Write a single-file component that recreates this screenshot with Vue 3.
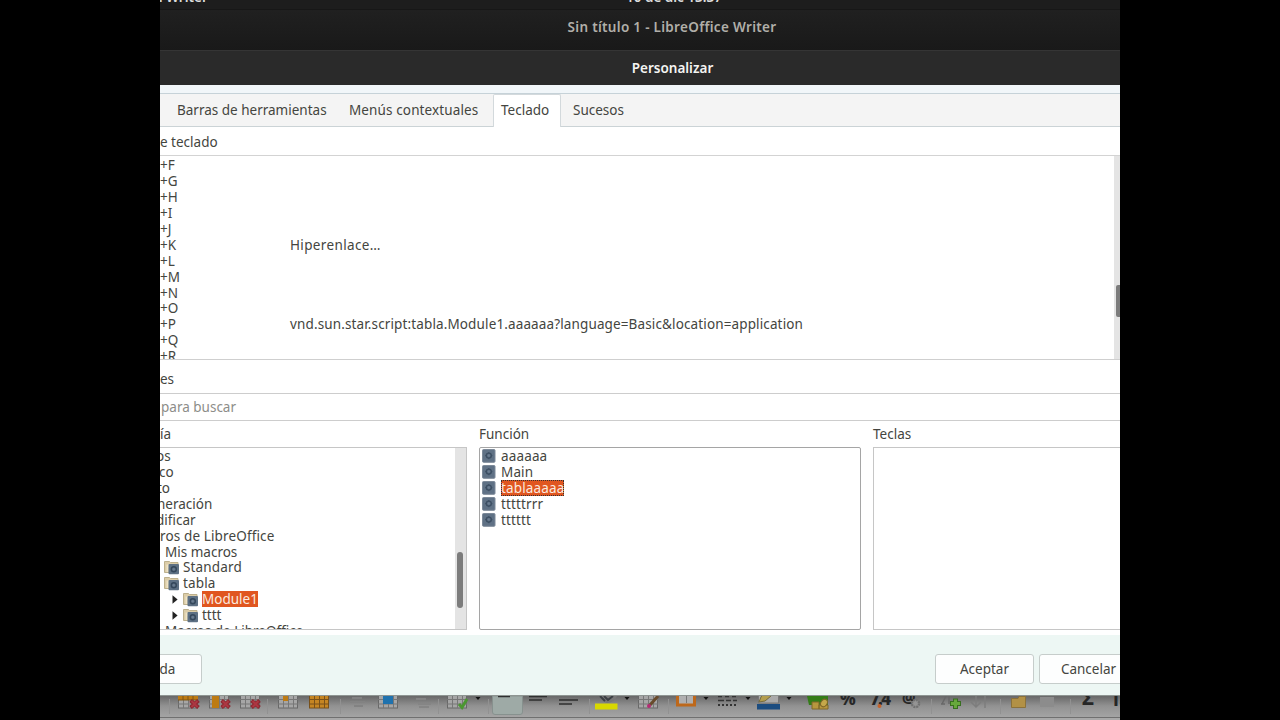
<script setup>
const shortcuts = [
  { key: '+F' },
  { key: '+G' },
  { key: '+H' },
  { key: '+I' },
  { key: '+J' },
  { key: '+K', command: 'Hiperenlace…' },
  { key: '+L' },
  { key: '+M' },
  { key: '+N' },
  { key: '+O' },
  { key: '+P', command: 'vnd.sun.star.script:tabla.Module1.aaaaaa?language=Basic&location=application' },
  { key: '+Q' },
  { key: '+R' }
]

const categories = [
  { label: 'os', level: 'cut-o' },
  { label: 'co', level: 'cut-c' },
  { label: 'to', level: 'cut-t' },
  { label: 'neración', level: 'cut-n' },
  { label: 'dificar', level: 'cut-d' },
  { label: 'ros de LibreOffice', level: 'cut-r' },
  { label: 'Mis macros', level: 'macros' },
  { label: 'Standard', level: 'library', icon: true },
  { label: 'tabla', level: 'library', icon: true },
  { label: 'Module1', level: 'module', icon: true, arrow: true, selected: true },
  { label: 'tttt', level: 'module', icon: true, arrow: true },
  { label: 'Macros de LibreOffice', level: 'macros' }
]

const functions = [
  { label: 'aaaaaa' },
  { label: 'Main' },
  { label: 'tablaaaaa', selected: true },
  { label: 'tttttrrr' },
  { label: 'tttttt' }
]

const separators = [169, 267, 340, 438, 488, 589, 668, 931, 1000, 1070]
const dropdowns = [478, 627, 706, 748, 789]
const grids = [178, 209, 240, 278, 378, 447, 638]
const crosses = [190, 221, 251]
</script>

<template>
  <div class="stage">
    <div class="screen">
      <div class="top-bar">
        <span class="app-name">n Writer</span>
        <span class="clock">10 de dic 13:37</span>
      </div>
      <div class="writer-title">Sin título 1 - LibreOffice Writer</div>
      <div class="dialog-title">Personalizar</div>

      <div class="dialog">
        <div class="tabs">
          <div class="tab toolbars">Barras de herramientas</div>
          <div class="tab menus">Menús contextuales</div>
          <div class="tab active">Teclado</div>
          <div class="tab events">Sucesos</div>
        </div>

        <div class="label shortcuts-label">e teclado</div>
        <div class="shortcuts">
          <div class="shortcut-rows">
            <div v-for="item in shortcuts" :key="item.key" class="shortcut">
              <span class="key">{{ item.key }}</span>
              <span class="command" :class="{ script: item.key === '+P' }">{{ item.command }}</span>
            </div>
          </div>
          <div class="shortcut-scroll"><div class="thumb"></div></div>
        </div>

        <div class="label functions-label">es</div>
        <div class="search">para buscar</div>

        <div class="columns">
          <div class="column category">
            <div class="label category-label">ía</div>
            <div class="panel">
              <div class="rows">
                <div v-for="item in categories" :key="item.label" class="row" :class="item.level">
                  <svg v-if="item.arrow" class="arrow" width="6" height="9" viewBox="0 0 6 9">
                    <path d="M0.5 0.2 L5.6 4.5 L0.5 8.8 Z" fill="#222" />
                  </svg>
                  <svg v-if="item.icon" class="folder" width="16" height="15" viewBox="0 0 16 15">
                    <path d="M0.5 1.5 H5.5 L6.5 2.5 H14 V12.5 H0.5 Z" fill="#dccda8" stroke="#bdb08c" />
                    <path d="M2.5 4.5 H13 V8 H4.5 V12 H2.5 Z" fill="#efe4c5" />
                    <rect x="4.5" y="4" width="10.5" height="10.2" rx="1" fill="#5d7084" />
                    <circle cx="9.8" cy="9.2" r="2.5" fill="none" stroke="#34475b" stroke-width="1.4" />
                    <circle cx="9.8" cy="9.2" r="1" fill="#6b7d91" />
                  </svg>
                  <span class="name" :class="{ selected: item.selected }">{{ item.label }}</span>
                </div>
              </div>
              <div class="category-scroll"><div class="thumb"></div></div>
            </div>
          </div>

          <div class="column function">
            <div class="label">Función</div>
            <div class="panel">
              <div class="rows">
                <div v-for="item in functions" :key="item.label" class="row">
                  <svg class="macro" width="14" height="14" viewBox="0 0 14 14">
                    <rect x="0.5" y="0.5" width="12.5" height="12.8" rx="1" fill="#5f7185" stroke="#7c8998" />
                    <circle cx="6.8" cy="6.6" r="2.5" fill="none" stroke="#3d4f63" stroke-width="1.4" />
                    <path d="M6.8 3 V10.2 M3.2 6.6 H10.4" stroke="#3d4f63" stroke-dasharray="1.3 4.6" />
                    <circle cx="6.8" cy="6.6" r="1.1" fill="#6b7d91" />
                  </svg>
                  <span class="name" :class="{ selected: item.selected, focused: item.selected }">{{ item.label }}</span>
                </div>
              </div>
            </div>
          </div>

          <div class="column keys">
            <div class="label">Teclas</div>
            <div class="panel"></div>
          </div>
        </div>

        <div class="footer">
          <button class="help">da</button>
          <button class="accept">Aceptar</button>
          <button class="cancel">Cancelar</button>
        </div>
      </div>

      <div class="toolbar">
        <svg width="960" height="24" viewBox="160 696 960 24">
          <path v-for="x in separators" :key="'s' + x" :d="`M${x}.5 699 V714`" stroke="#919191" />

          <!-- table grids -->
          <g v-for="x in grids" :key="'g' + x">
            <rect :x="x + 0.5" y="690.5" width="19" height="17.5" fill="#a6a6a6" stroke="#686868" />
            <path :d="`M${x} 699.5 h20 M${x} 704 h20 M${x + 5.5} 696 v12 M${x + 10.5} 696 v12 M${x + 15.5} 696 v12`" stroke="#777" />
          </g>
          <path d="M178 696 H198 V700 H178 Z M212 696 H219 V708 H212 Z M283 696 H288 V701 H283 Z" fill="#bd7b13" />
          <path d="M178 700 H198 M183 696 V700 M188 696 V700 M193 696 V700" stroke="#7f5716" />

          <g v-for="x in crosses" :key="'x' + x">
            <path :d="`M${x + 0.5} 700.5 l8 7 m0 -7 l-8 7`" stroke="#8c2932" stroke-width="4" />
            <path :d="`M${x + 1.5} 701 l6 6 m0 -6 l-6 6`" stroke="#ac3742" stroke-width="2" />
          </g>

          <rect x="309.5" y="690.5" width="19" height="17.5" fill="#c58522" stroke="#79511a" />
          <path d="M309 699.5 h20 M309 704 h20 M314.5 696 v12 M319.5 696 v12 M324.5 696 v12" stroke="#79511a" />

          <path d="M352 698 h10 M350 702 h15 M354 706 h9" stroke="#828282" stroke-width="2" />
          <rect x="383" y="696" width="10" height="8" fill="#1f72ae" />
          <path d="M416 699 h10 M418 704 h13 M419 707 h10" stroke="#858585" stroke-width="2" />
          <path d="M459 704 L462 707.5 L467 699" fill="none" stroke="#4b9631" stroke-width="3" />

          <path v-for="x in dropdowns" :key="'d' + x" :d="`M${x - 2.5} 697 h5 l-2.5 3 Z`" fill="#111" />

          <!-- vertical alignment -->
          <path d="M492.5 696 V712 Q492.5 714.5 495 714.5 H520 Q522.5 714.5 522.5 712 V696 Z" fill="#9eaaa6" stroke="#87918e" />
          <path d="M498 696.5 h12 M529 696.5 h18 M529 700 h13 M559 700 h19 M559 704 h13" stroke="#2f2f2f" stroke-width="1.6" />

          <!-- background colour -->
          <path d="M599 696 H617 Q615 702 607 703 Q602 702 599 696" fill="#777" />
          <path d="M600 696 L605 701 M604 696 L608 700 L613 696" fill="none" stroke="#3b3f43" stroke-width="2" />
          <rect x="595" y="703.5" width="22.5" height="6" fill="#d8d800" />

          <path d="M658 696 L650 705" stroke="#684b2b" stroke-width="3" />
          <circle cx="649" cy="706" r="2" fill="#b52a74" />

          <!-- borders -->
          <path d="M677.5 696 V705 H694.5 V696" fill="#b0b0b0" stroke="#bd681b" stroke-width="3" />
          <path d="M686.5 696 V703" stroke="#777" />
          <path d="M718 696.5 h4 m3 0 h4 m3 0 h4 M718 700.5 h6 m2 0 h5 m2 0 h4" stroke="#333" stroke-width="1.5" />
          <path d="M718 705 h19" stroke="#333" stroke-width="2" stroke-dasharray="2 2" />
          <rect x="758.5" y="690" width="20" height="13" fill="#aaa" stroke="#777" />
          <path d="M759 702 L761 697 L765 692 L771 696 L765 701 Z" fill="#b39e4e" stroke="#756a3b" />
          <rect x="757" y="704" width="23" height="5.5" fill="#1c4d80" />

          <!-- number formats -->
          <path d="M807 696 H828 V705 H809 Z" fill="#347d18" />
          <path d="M812 702 h7 v7 h-7 Z M819 705 h9 v4 h-9 Z" fill="#b7973e" stroke="#806829" />
          <ellipse cx="824" cy="703" rx="3" ry="4" fill="#c5a84a" stroke="#806829" transform="rotate(35 824 703)" />
          <text x="840" y="705" class="glyph" textLength="18">%</text>
          <text x="870" y="705" class="glyph" textLength="21">7.4</text>
          <circle cx="879.5" cy="706" r="2" fill="#c4622b" />
          <text x="902" y="703" class="glyph at">@</text>
          <circle cx="915.5" cy="703.5" r="3.6" fill="#949494" stroke="#707070" stroke-width="2.4" stroke-dasharray="2 0.8" />

          <path d="M942 704 L946 696 M949 696 V704 M941 704 h4" fill="none" stroke="#686868" stroke-width="1.5" />
          <path d="M955.5 698.5 V709 M950 703.5 H961" stroke="#386f20" stroke-width="5" />
          <path d="M955.5 699.5 V708 M951 703.5 H960" stroke="#67a83c" stroke-width="3" />
          <path d="M976 696 V706 M971 702 L976 707 L981 702 M985 696 V708" fill="none" stroke="#7d7d7d" stroke-width="1.5" />
          <path d="M1011.5 698.5 H1018 L1019 696.5 H1025.5 V707.5 H1011.5 Z" fill="#b29146" stroke="#8a713b" />
          <rect x="1040" y="697" width="14" height="10" fill="#8c8c8c" />
          <text x="1082" y="705" class="glyph sum">Σ</text>
          <text x="1111" y="706" class="glyph">Ta</text>
        </svg>
      </div>
    </div>
  </div>
</template>

<style>
body {
  background: #000;
}
</style>

<style scoped>
.stage {
  display: flex;
  justify-content: center;
  width: 1280px;
  height: 720px;
  background: #000;
  overflow: hidden;
}

.stage,
button {
  font-family: "Noto Sans", "Open Sans", sans-serif;
  font-size: 13.5px;
  color: #444540;
}

.stage * {
  box-sizing: border-box;
}

.screen {
  display: flex;
  flex-direction: column;
  width: 960px;
  height: 720px;
  overflow: hidden;
  white-space: nowrap;
}

.top-bar {
  display: flex;
  height: 10px;
  background: #1d1d1d;
  border-bottom: 1px solid #171717;
  color: #ddd;
  font-weight: 600;
  line-height: 16px;
  overflow: hidden;
}

.top-bar span {
  margin-top: -11px;
}

.app-name {
  width: 467px;
  margin-left: -6px;
}

.clock {
  margin-left: 5px;
}

.writer-title {
  height: 40px;
  padding-left: 64px;
  text-align: center;
  line-height: 34px;
  font-weight: 600;
  letter-spacing: 0.3px;
  color: #b1afa9;
  background: linear-gradient(#202020, #191919);
}

.dialog-title {
  height: 35px;
  padding-left: 65px;
  border-top: 1px solid #353535;
  background: #2a2a2a;
  color: #f4f4f2;
  font-weight: 600;
  line-height: 34px;
  text-align: center;
}

.dialog {
  display: flex;
  flex-direction: column;
  height: 611px;
  background: #fff;
}

.tabs {
  display: flex;
  height: 42px;
  border-top: 8px solid #f1f6f9;
  border-bottom: 1px solid #cbd3d6;
  background: #f4f4f4;
  box-shadow: inset 0 1px #c6d2d8;
}

.tab {
  line-height: 35px;
}

.toolbars {
  width: 172px;
  margin-left: 17px;
}

.menus {
  width: 144px;
  letter-spacing: 0.12px;
}

.tab.active {
  width: 68px;
  height: 33px;
  margin-top: 1px;
  padding-left: 7px;
  line-height: 30px;
  background: #fff;
  border: 1px solid #d3d9dc;
  border-bottom: none;
  border-radius: 2px 2px 0 0;
}

.events {
  padding-left: 12px;
}

.label {
  height: 26px;
  line-height: 27px;
}

.shortcuts-label {
  height: 28px;
  line-height: 31px;
}

.shortcuts {
  display: flex;
  height: 205px;
  border-top: 1px solid #d3d3d3;
  border-bottom: 1px solid #cfcfcf;
  overflow: hidden;
}

.shortcut-rows {
  width: 954px;
  padding-top: 1px;
}

.shortcut {
  display: flex;
  height: 15.94px;
  line-height: 16px;
}

.key {
  width: 130px;
}

.command {
  letter-spacing: 0.36px;
}

.command.script {
  letter-spacing: 0.13px;
}

.shortcut-scroll {
  width: 6px;
  padding: 129px 0 0 2px;
  background: #e4e4e4;
}

.thumb {
  background: #7c7c7c;
  border-radius: 3px;
}

.shortcut-scroll .thumb {
  height: 32px;
  border-radius: 2px 0 0 2px;
}

.functions-label {
  height: 33px;
  line-height: 39px;
}

.search {
  height: 28px;
  padding-left: 1px;
  line-height: 26px;
  color: #8d8d89;
  border-top: 1px solid #cdcdcd;
  border-bottom: 1px solid #cdcdcd;
}

.columns {
  display: flex;
  gap: 12px;
  height: 214px;
}

.column {
  flex-shrink: 0;
}

.panel {
  display: flex;
  height: 183px;
  border: 1px solid #c6c6c6;
  overflow: hidden;
}

.category {
  width: 307px;
}

.category .panel {
  border-left: none;
}

.category .rows {
  width: 295px;
  overflow: hidden;
}

.function {
  width: 382px;
}

.function .panel {
  border-color: #a5a5a5;
  border-radius: 2px;
}

.keys {
  width: 260px;
}

.category-scroll {
  width: 11px;
  padding: 104px 3px 0 2px;
  background: #e4e4e4;
}

.category-scroll .thumb {
  width: 6px;
  height: 56px;
}

.row {
  display: flex;
  align-items: center;
  height: 15.93px;
  line-height: 16px;
}

.cut-o {
  margin-left: -4px;
}

.cut-c {
  margin-left: -1px;
}

.cut-t {
  margin-left: -3px;
}

.cut-n {
  margin-left: -3px;
}

.cut-d {
  margin-left: -4px;
}

.cut-r {
  letter-spacing: 0.13px;
}

.macros {
  padding-left: 5px;
}

.library {
  padding-left: 4px;
  letter-spacing: 0.15px;
}

.module {
  padding-left: 12px;
}

.arrow {
  margin-right: 5px;
}

.folder {
  width: 16px;
  margin-right: 3px;
}

.macro {
  margin: 0 5px 0 2px;
}

.function .name {
  letter-spacing: 0.15px;
}

.selected {
  color: #fbe9df;
  background: #e05620;
}

.focused {
  outline: 1px dotted #333;
  outline-offset: -1px;
}

.footer {
  display: flex;
  height: 61px;
  padding-top: 19px;
  background: #edf7f4;
  border-bottom: 1px solid #8e9592;
}

button {
  flex-shrink: 0;
  height: 30px;
  padding: 0;
  background: #fdfefe;
  border: 1px solid #c6cdcb;
  border-radius: 3px;
}

.help {
  width: 47px;
  margin-left: -5px;
  padding-right: 22px;
}

.accept {
  width: 99px;
  margin-left: 733px;
}

.cancel {
  width: 99px;
  margin-left: 5px;
}

.toolbar {
  height: 24px;
  background: linear-gradient(#686868, #929292 10px, #a4a4a4 21px, #707070 21px, #707070 22px, #a9a9a9 22px);
}

.toolbar svg {
  display: block;
}

.glyph {
  font-size: 17px;
  font-weight: 800;
  fill: #262626;
}

.glyph.at {
  font-size: 15px;
}

.glyph.sum {
  font-size: 20px;
}
</style>
